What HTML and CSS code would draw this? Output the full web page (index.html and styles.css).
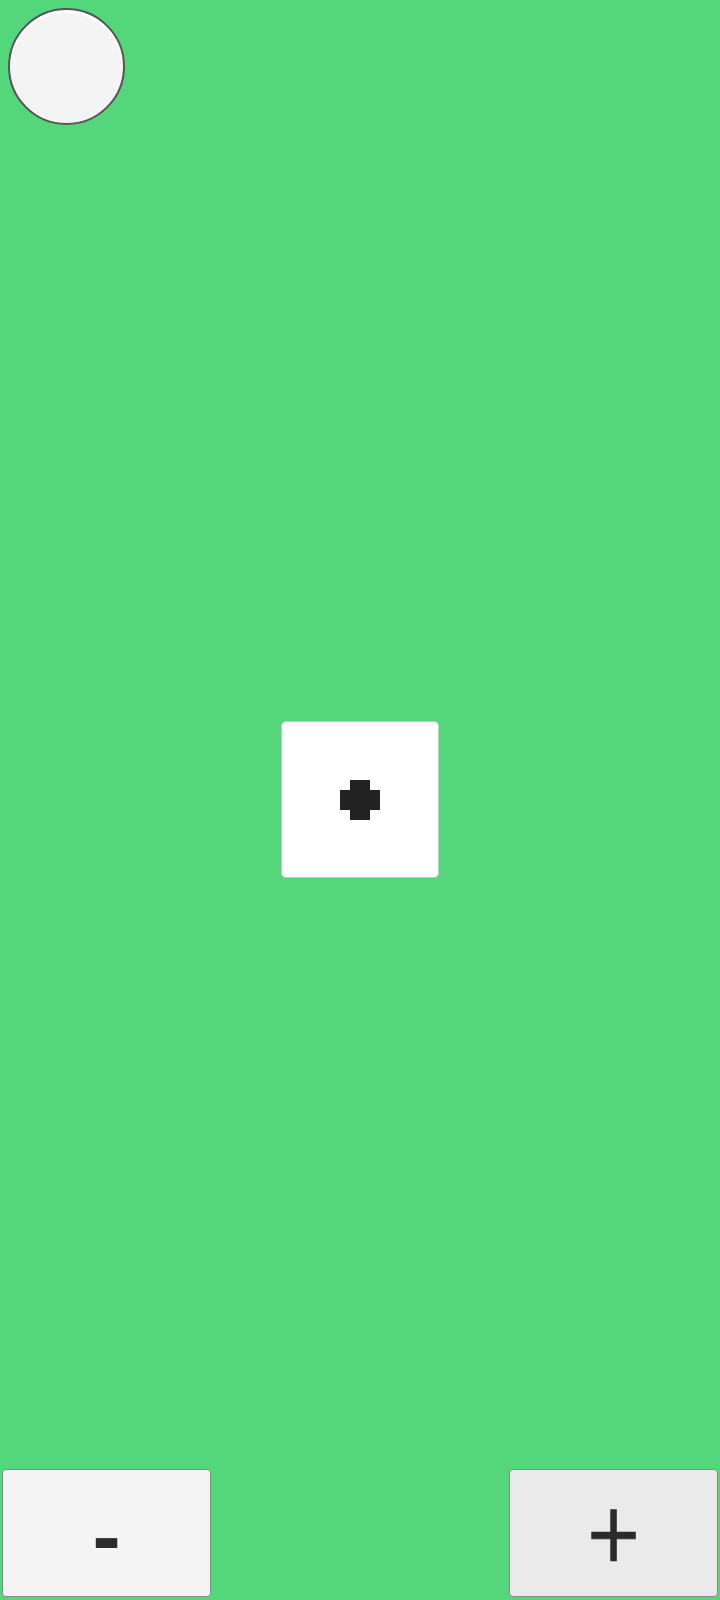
FILE: index.html
```html
<!DOCTYPE html>
<html>
<head>
<meta charset="utf-8">
<link rel="stylesheet" href="styles.css">
</head>
<body>
<div class="app">
  <div class="top">
    <div class="ball"></div>
  </div>
  <div class="middle">
    <div class="card">
      <svg class="cross" width="40" height="40" viewBox="0 0 4 4" shape-rendering="crispEdges">
        <polygon points="1,0 3,0 3,1 4,1 4,3 3,3 3,4 1,4 1,3 0,3 0,1 1,1" fill="#222222"/>
      </svg>
    </div>
  </div>
  <div class="bottom">
    <button class="btn btn-minus"><span class="lbl-minus">-</span></button>
    <button class="btn btn-plus"><span class="lbl-plus">+</span></button>
  </div>
</div>
</body>
</html>
```
FILE: styles.css
```css
html, body {
  margin: 0;
  padding: 0;
}
body {
  background: #54d77b;
  font-family: "DejaVu Sans", sans-serif;
}
.app {
  height: 1600px;
  display: flex;
  flex-direction: column;
}
.top {
  padding: 8px 0 0 8px;
  height: 125px;
  box-sizing: border-box;
}
.ball {
  width: 117px;
  height: 117px;
  box-sizing: border-box;
  border-radius: 50%;
  background: #f4f4f4;
  border: 2px solid #555555;
  box-shadow: inset 0 3px 2px #ffffff;
}
.middle {
  flex: 1;
  display: flex;
  align-items: center;
  justify-content: center;
  padding-top: 5px;
}
.card {
  width: 158px;
  height: 157px;
  box-sizing: border-box;
  background: #ffffff;
  border: 1px solid #c8c8c8;
  border-radius: 5px;
  display: flex;
  align-items: center;
  justify-content: center;
}
.bottom {
  display: flex;
  justify-content: space-between;
  padding: 0 2px 3px 2px;
}
.btn {
  width: 209px;
  height: 128px;
  box-sizing: border-box;
  border: 1px solid #8a8a8a;
  border-radius: 4px;
  margin: 0;
  padding: 0;
  display: flex;
  align-items: center;
  justify-content: center;
  color: #2b2b2b;
  font-family: "DejaVu Sans", sans-serif;
}
.btn-minus {
  background: #f4f4f4;
}
.btn-plus {
  background: #eaeaea;
}
.lbl-minus {
  font-size: 70px;
  font-weight: bold;
  line-height: 1;
  display: inline-block;
  transform: translateY(6px);
}
.lbl-plus {
  font-size: 70px;
  font-weight: 500;
  line-height: 1;
  display: inline-block;
  transform: scaleY(1.17);
  -webkit-text-stroke: 0.6px #2b2b2b;
}
```
